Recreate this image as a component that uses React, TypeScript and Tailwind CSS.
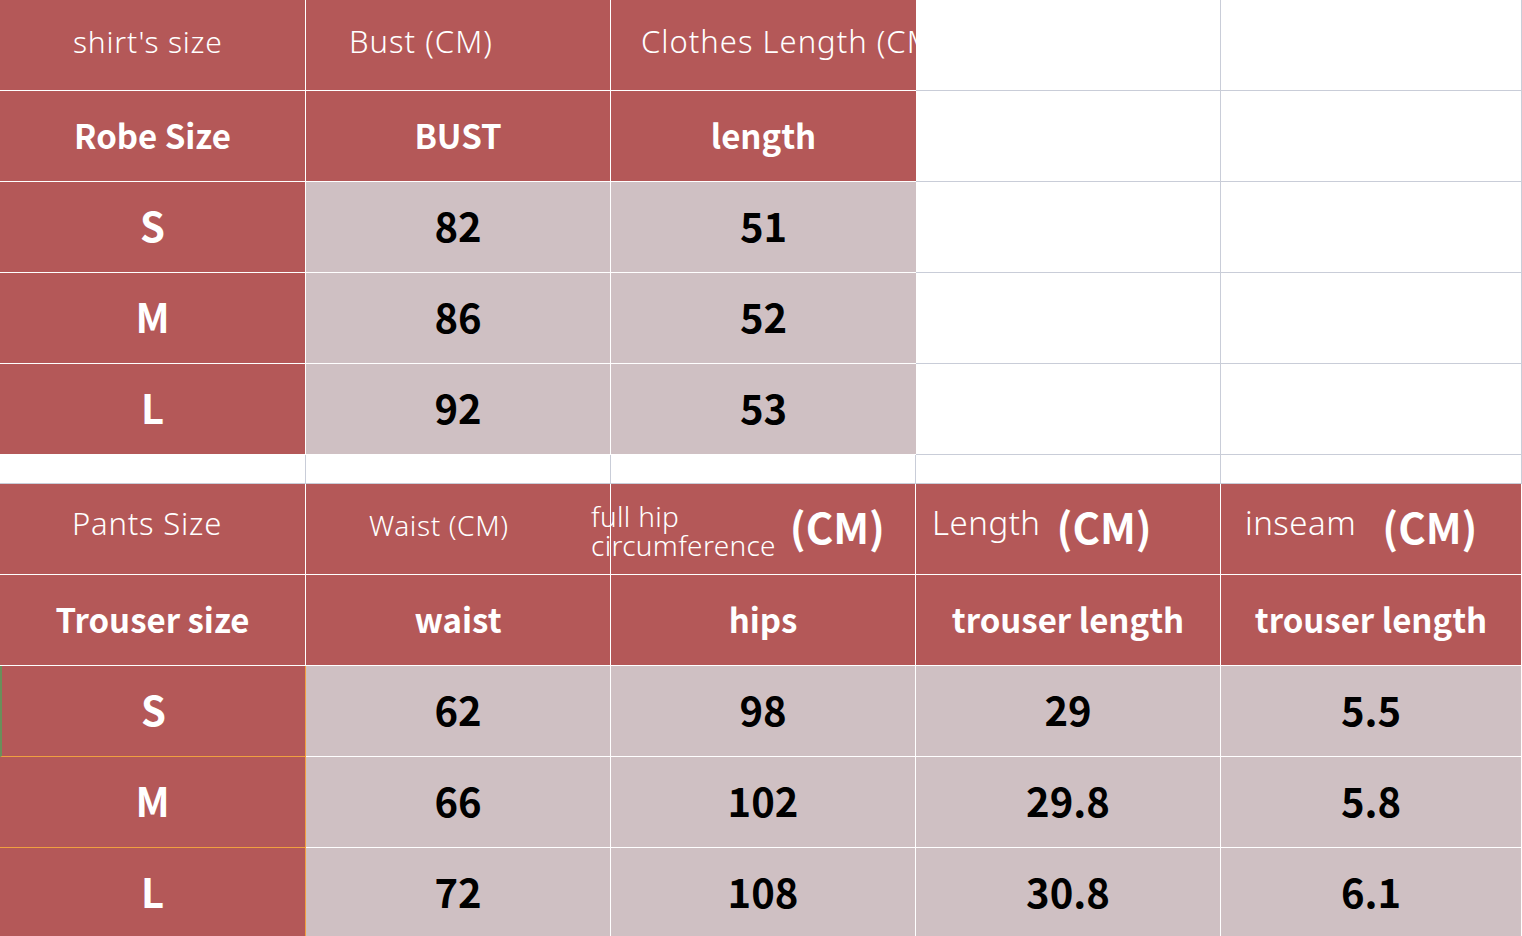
const red = 'bg-[#b45858]';
const pink = 'bg-[#cfc0c3]';

const shirtRows = [
  ['S', '82', '51'],
  ['M', '86', '52'],
  ['L', '92', '53'],
];

const pantsRows = [
  ['S', '62', '98', '29', '5.5'],
  ['M', '66', '102', '29.8', '5.8'],
  ['L', '72', '108', '30.8', '6.1'],
];

const light = "font-['Noto_Sans',sans-serif] font-light text-white";
const bold = "font-['Noto_Sans_CJK_SC','Noto_Sans',sans-serif] font-bold";

function Cell({
  className = '',
  children,
}: {
  className?: string;
  children?: React.ReactNode;
}) {
  return (
    <div className={`flex h-[91px] items-center border-b border-r ${className}`}>
      {children}
    </div>
  );
}

function Blank() {
  return <Cell className="border-[#c9cdd8] bg-white" />;
}

export default function App() {
  return (
    <div className="h-[936px] w-[1522px] overflow-hidden bg-white">
      <div className="grid grid-cols-[306px_305px_305px_305px_301px]">
        {/* shirt table */}
        <Cell className={`${red} border-white`}>
          <span className={`${light} pl-[73px] pb-2 text-[30px] tracking-[0.8px]`}>shirt's size</span>
        </Cell>
        <Cell className={`${red} border-white`}>
          <span className={`${light} pl-[43px] pb-2 text-[31px] tracking-[1px]`}>Bust (CM)</span>
        </Cell>
        <Cell className={`${red} overflow-hidden border-r-0 border-white`}>
          <span className={`${light} whitespace-nowrap pl-[30px] pb-2 text-[31px] tracking-[1px]`}>
            Clothes Length (CM)
          </span>
        </Cell>
        <Blank />
        <Blank />

        {['Robe Size', 'BUST', 'length'].map((t, i) => (
          <Cell key={t} className={`${red} justify-center border-white ${i === 2 ? 'border-r-0' : ''}`}>
            <span className={`${bold} text-[33px] text-white`}>{t}</span>
          </Cell>
        ))}
        <Blank />
        <Blank />

        {shirtRows.map((row) => (
          <>
            {row.map((v, i) => (
              <Cell
                key={row[0] + i}
                className={`${i === 0 ? red : pink} justify-center border-white ${i === 2 ? 'border-r-0' : ''}`}
              >
                <span className={`${bold} pb-[5px] text-[40px] ${i === 0 ? 'text-white' : 'text-black'}`}>{v}</span>
              </Cell>
            ))}
            <Blank />
            <Blank />
          </>
        ))}

        {/* spacer row */}
        {[0, 1, 2, 3, 4].map((i) => (
          <div key={'gap' + i} className="h-[29px] border-b border-r border-[#c9cdd8] bg-white" />
        ))}

        {/* pants table */}
        <Cell className={`${red} border-white`}>
          <span className={`${light} pl-[72px] pb-3 text-[31px] tracking-[0.8px]`}>Pants Size</span>
        </Cell>
        <Cell className={`${red} border-white`}>
          <span className={`${light} pl-[63px] pb-2 text-[28px] tracking-[0.6px]`}>Waist (CM)</span>
        </Cell>
        <Cell className={`${red} border-white`}>
          <div className="-ml-[20px] flex items-center">
            <span className={`${light} pt-1 text-[28px] leading-[29px] tracking-[0.3px]`}>
              full hip
              <br />
              circumference
            </span>
            <span className={`${bold} ml-[14px] pb-2 text-[42px] text-white`}>(CM)</span>
          </div>
        </Cell>
        <Cell className={`${red} border-white`}>
          <span className={`${light} pl-[16px] pb-3 text-[33px] tracking-[0.5px]`}>Length</span>
          <span className={`${bold} ml-[16px] pb-2 text-[42px] text-white`}>(CM)</span>
        </Cell>
        <Cell className={`${red} border-white`}>
          <span className={`${light} pl-[24px] pb-3 text-[33px] tracking-[0.5px]`}>inseam</span>
          <span className={`${bold} ml-[26px] pb-2 text-[42px] text-white`}>(CM)</span>
        </Cell>

        {['Trouser size', 'waist', 'hips', 'trouser length', 'trouser length'].map((t, i) => (
          <Cell key={'h' + i} className={`${red} justify-center border-white`}>
            <span className={`${bold} text-[33px] text-white`}>{t}</span>
          </Cell>
        ))}

        {pantsRows.map((row, r) =>
          row.map((v, i) => (
            <Cell
              key={'p' + r + i}
              className={`${i === 0 ? red : pink} justify-center ${
                i === 0 ? 'border-[#f0a040]' : 'border-white'
              } ${i === 0 && r === 0 ? 'border-l-2 border-l-[#6a8f5a]' : ''}`}
            >
              <span className={`${bold} pb-[5px] text-[40px] ${i === 0 ? 'text-white' : 'text-black'}`}>{v}</span>
            </Cell>
          ))
        )}
      </div>
    </div>
  );
}
